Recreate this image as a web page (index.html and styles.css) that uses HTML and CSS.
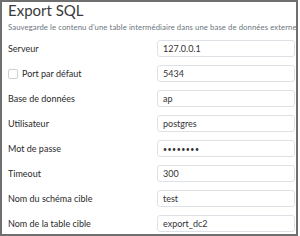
FILE: index.html
```html
<!DOCTYPE html>
<html>
  <head>
    <title>Export SQL</title>
    <link rel="stylesheet" href="styles.css">
  </head>
  <body>
    <div class="dialog">
      <h1>Export SQL</h1>
      <p class="subtitle">Sauvegarde le contenu d'une table intermédiaire dans une base de données externe</p>

      <form class="fields">
        <label>Serveur</label>
        <input class="inputs" type="text" value="127.0.0.1">

        <label class="check"><span class="box"></span>Port par défaut</label>
        <input class="inputs" type="text" value="5434">

        <label>Base de données</label>
        <input class="inputs" type="text" value="ap">

        <label>Utilisateur</label>
        <input class="inputs" type="text" value="postgres">

        <label>Mot de passe</label>
        <input class="inputs" type="password" value="postgres">

        <label>Timeout</label>
        <input class="inputs" type="text" value="300">

        <label>Nom du schéma cible</label>
        <input class="inputs" type="text" value="test">

        <label>Nom de la table cible</label>
        <input class="inputs" type="text" value="export_dc2">
      </form>
    </div>
  </body>
</html>
```

FILE: styles.css
```css
body {
  margin: 0;
  background: #fff;
  font-family: Lato, "Noto Sans", sans-serif;
  color: #222;
}
.dialog {
  box-sizing: border-box;
  width: 298px;
  height: 236px;
  border: 2px solid #6f6f6f;
  padding: 0 1px 0 6px;
  overflow: hidden;
}
.dialog h1 {
  margin: 0;
  font-size: 15px;
  font-weight: 400;
  line-height: 16px;
  color: #3a3a3a;
}
.subtitle {
  margin: 4px 0 0;
  font-size: 7.7px;
  letter-spacing: 0.1px;
  line-height: 10px;
  color: #6c757d;
  white-space: nowrap;
}
.fields {
  display: grid;
  grid-template-columns: 149px 1fr;
  row-gap: 8px;
  align-items: center;
  margin-top: 8px;
}
.fields label {
  font-size: 9px;
  color: #2a2a2a;
}
.check {
  display: flex;
  align-items: center;
  gap: 4px;
}
.check .box {
  width: 8px;
  height: 8px;
  border: 1px solid #d0d0d0;
  border-radius: 2px;
}
.inputs {
  box-sizing: border-box;
  height: 17px;
  width: 100%;
  margin: 0;
  padding: 0 5px;
  border: 1px solid #dee2e6;
  border-radius: 3px;
  font-family: inherit;
  font-size: 9px;
  color: #333;
  background: #fff;
}
input[type="password"] {
  font-size: 7px;
  letter-spacing: 0.5px;
}
```
